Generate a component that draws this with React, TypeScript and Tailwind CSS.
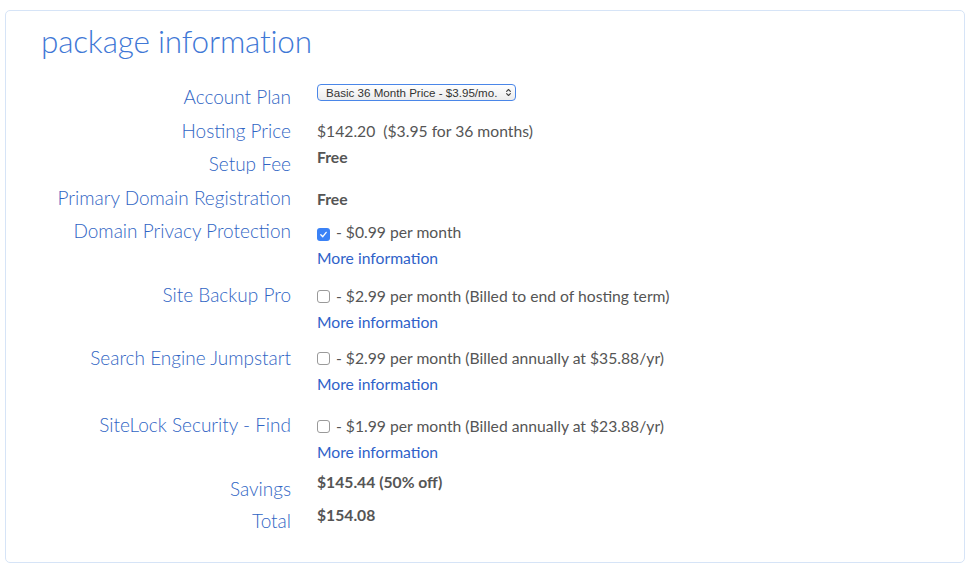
import { ChevronsUpDown } from 'lucide-react';

type Row = {
  label: string;
  h: string;
  labelPt: string;
  value: React.ReactNode;
};

const font = { fontFamily: 'Lato, "Open Sans", sans-serif' };

function Check({ on }: { on?: boolean }) {
  return on ? (
    <span className="inline-flex items-center justify-center w-[13px] h-[13px] rounded-[3px] bg-[#3b82f6] mr-[6px] align-[-1px]">
      <svg viewBox="0 0 10 10" className="w-[9px] h-[9px]">
        <path d="M2 5.2 L4.2 7.4 L8 2.6" fill="none" stroke="white" strokeWidth="1.5" strokeLinecap="round" strokeLinejoin="round" />
      </svg>
    </span>
  ) : (
    <span className="inline-block w-[13px] h-[13px] rounded-[3px] border border-[#9a9a9a] bg-white mr-[6px] align-[-1px]" />
  );
}

function Addon({ on, text }: { on?: boolean; text: string }) {
  return (
    <div className="leading-[26px]">
      <div>
        <Check on={on} />- {text}
      </div>
      <a className="text-[#2f62c9] cursor-pointer">More information</a>
    </div>
  );
}

const rows: Row[] = [
  {
    label: 'Account Plan',
    h: 'h-[38px]',
    labelPt: 'pt-[5px]',
    value: (
      <div
        className="mt-[1px] inline-flex items-center h-[17px] w-[199px] border border-[#4a86e8] rounded-[4px] bg-gradient-to-b from-white to-[#ececec] pl-[8px] pr-[2px] text-[11.6px] text-[#333]"
        style={{ fontFamily: '"Liberation Sans", Arial, sans-serif' }}
      >
        <span className="flex-1 leading-none whitespace-nowrap">Basic 36 Month Price - $3.95/mo.</span>
        <ChevronsUpDown className="w-[9px] h-[9px] text-[#444] shrink-0" strokeWidth={3} />
      </div>
    ),
  },
  {
    label: 'Hosting Price',
    h: 'h-[26px]',
    labelPt: 'pt-[1px]',
    value: <div className="leading-[26px]">$142.20&nbsp; ($3.95 for 36 months)</div>,
  },
  {
    label: 'Setup Fee',
    h: 'h-[42px]',
    labelPt: 'pt-[8px]',
    value: <div className="leading-[26px] font-bold">Free</div>,
  },
  {
    label: 'Primary Domain Registration',
    h: 'h-[33px]',
    labelPt: 'pt-0',
    value: <div className="leading-[26px] font-bold">Free</div>,
  },
  {
    label: 'Domain Privacy Protection',
    h: 'h-[64px]',
    labelPt: 'pt-0',
    value: <Addon on text="$0.99 per month" />,
  },
  {
    label: 'Site Backup Pro',
    h: 'h-[62px]',
    labelPt: 'pt-0',
    value: <Addon text="$2.99 per month (Billed to end of hosting term)" />,
  },
  {
    label: 'Search Engine Jumpstart',
    h: 'h-[68px]',
    labelPt: 'pt-[1px]',
    value: <Addon text="$2.99 per month (Billed annually at $35.88/yr)" />,
  },
  {
    label: 'SiteLock Security - Find',
    h: 'h-[56px]',
    labelPt: 'pt-0',
    value: <Addon text="$1.99 per month (Billed annually at $23.88/yr)" />,
  },
  {
    label: 'Savings',
    h: 'h-[33px]',
    labelPt: 'pt-[8px]',
    value: <div className="leading-[26px] font-bold">$145.44 (50% off)</div>,
  },
  {
    label: 'Total',
    h: 'h-[40px]',
    labelPt: 'pt-[7px]',
    value: <div className="leading-[26px] font-bold">$154.08</div>,
  },
];

export default function App() {
  return (
    <div className="w-[970px] h-[570px] bg-white pt-[10px] pl-[5px]" style={font}>
      <div className="w-[960px] h-[553px] border border-[#d6e4f7] rounded-[5px]">
        <h1 className="pl-[35px] pt-[12px] text-[31.5px] leading-[36px] text-[#3f78d6] font-light tracking-[-0.2px]">
          package information
        </h1>
        <div className="mt-[21px]">
          {rows.map((r) => (
            <div key={r.label} className={`flex ${r.h}`}>
              <div className={`w-[285px] shrink-0 text-right text-[19px] leading-[24px] text-[#3065c4] font-light ${r.labelPt}`}>
                {r.label}
              </div>
              <div className="pl-[26px] text-[15.7px] text-[#555]">{r.value}</div>
            </div>
          ))}
        </div>
      </div>
    </div>
  );
}
